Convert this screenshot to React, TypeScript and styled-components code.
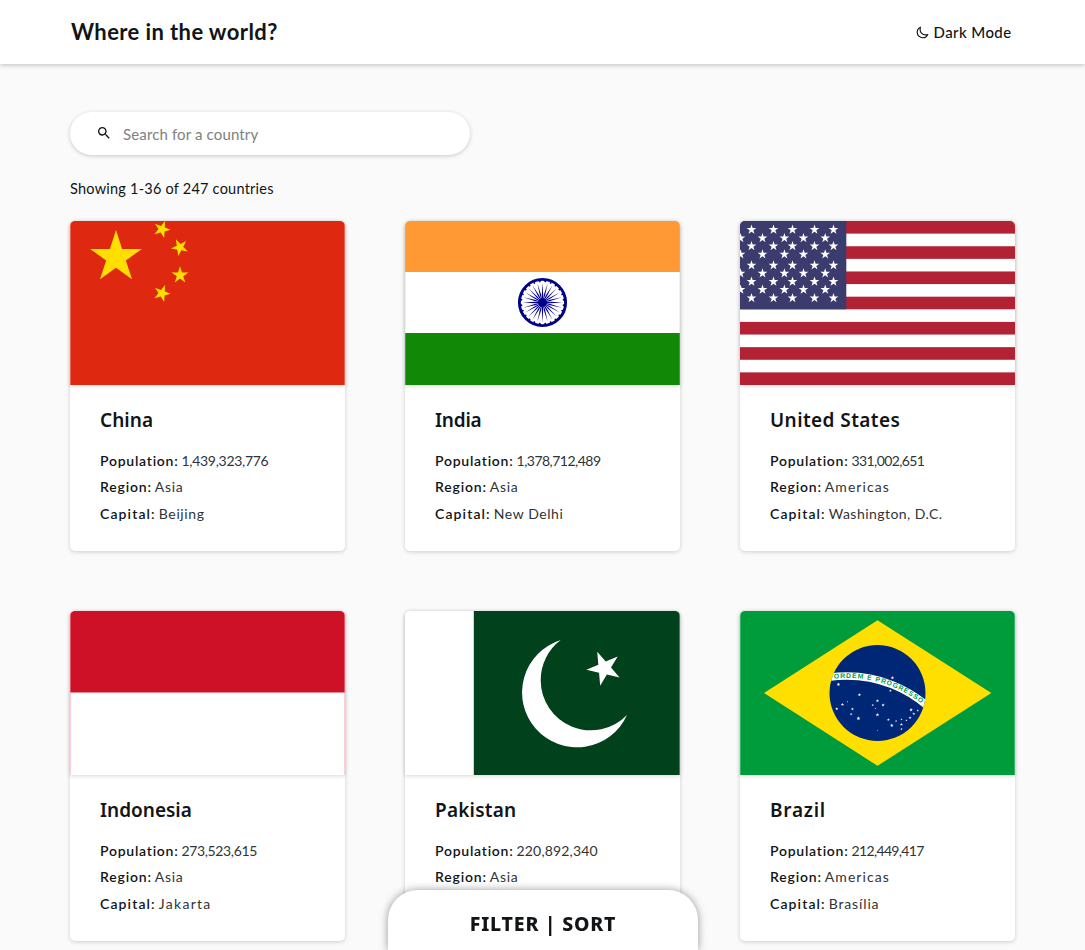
import React from 'react';
import styled, { createGlobalStyle } from 'styled-components';
import { IoMoonOutline } from 'react-icons/io5';
import { MdSearch } from 'react-icons/md';

const GlobalStyle = createGlobalStyle`
  *, *::before, *::after { box-sizing: border-box; }
  body {
    margin: 0;
    background: #fafafa;
    color: #111517;
    font-family: Lato, "Liberation Sans", sans-serif;
    font-variant-ligatures: none;
  }
  h1, h2, p { margin: 0; }
`;

const Header = styled.header`
  display: flex;
  align-items: center;
  justify-content: space-between;
  height: 64px;
  padding: 0 73.5px 0 70px;
  background: #fff;
  box-shadow: 0 2px 4px rgba(0, 0, 0, 0.18);
`;

const Title = styled.h1`
  padding-left: 1px;
  font-size: 22px;
  font-weight: 700;
  line-height: 64px;
  letter-spacing: 0.4px;
`;

const ThemeToggle = styled.button`
  display: flex;
  align-items: center;
  gap: 5px;
  padding: 0;
  border: 0;
  background: none;
  color: inherit;
  font: 500 15px/20px Lato, sans-serif;
  letter-spacing: 0.4px;
  path { stroke-width: 46px; }
`;

const Main = styled.main`
  padding: 48px 70px 9px;
`;

const SearchBox = styled.label`
  display: flex;
  align-items: center;
  width: 400px;
  height: 43px;
  padding: 0 26px 1px;
  border-radius: 22px;
  background: #fff;
  box-shadow: 0 1px 4px rgba(0, 0, 0, 0.2);
`;

const SearchInput = styled.input`
  flex: 1;
  margin-left: 11px;
  padding: 1px 0 0;
  border: 0;
  outline: 0;
  background: none;
  font: 400 15px/20px Lato, sans-serif;
  letter-spacing: 0.14px;
  &::placeholder { color: #808080; opacity: 1; }
`;

const Summary = styled.p`
  margin: 21px 0 20px;
  font-size: 14.5px;
  line-height: 25px;
  letter-spacing: 0.23px;
`;

const Grid = styled.section`
  display: grid;
  grid-template-columns: repeat(3, 275px);
  gap: 60px;
`;

const Card = styled.article`
  height: 330px;
  border-radius: 5px;
  background: #fff;
  box-shadow: 0 1px 4px rgba(0, 0, 0, 0.18);
`;

const Flag = styled.svg`
  display: block;
  width: 275px;
  height: 164px;
  border-radius: 5px 5px 0 0;
  box-shadow: 0 1px 4px rgba(0, 0, 0, 0.16);
`;

const CardBody = styled.div`
  padding: 20px 30px 0;
`;

const Name = styled.h2<{ $spacing: number }>`
  margin-bottom: 12.5px;
  font: 600 19px/30px "Noto Sans", sans-serif;
  letter-spacing: ${(p) => p.$spacing}px;
`;

const Fact = styled.p`
  display: flex;
  gap: 3px;
  font-size: 14px;
  line-height: 26.5px;
`;

const Label = styled.span<{ $spacing: number }>`
  font-weight: 600;
  letter-spacing: ${(p) => p.$spacing}px;
`;

const Value = styled.span<{ $spacing: number }>`
  color: #303437;
  white-space: nowrap;
  letter-spacing: ${(p) => p.$spacing}px;
`;

const FilterBar = styled.button`
  position: fixed;
  left: 388px;
  bottom: 0;
  width: 310px;
  height: 60px;
  padding: 7px 0 0;
  border: 0;
  border-radius: 30px 30px 0 0;
  background: #fff;
  box-shadow: 0 0 8px rgba(0, 0, 0, 0.4);
  color: #111517;
  font: 800 19.5px/28px "Noto Sans", sans-serif;
  letter-spacing: 0.82px;
`;

const starPoints = (cx: number, cy: number, r: number, turn = 0) =>
  Array.from({ length: 10 }, (_, i) => {
    const a = ((i * 36 - 90 + turn) * Math.PI) / 180;
    const d = i % 2 ? r * 0.382 : r;
    return `${(cx + d * Math.cos(a)).toFixed(2)},${(cy + d * Math.sin(a)).toFixed(2)}`;
  }).join(' ');

type StarProps = { x: number; y: number; r: number; turn?: number; fill?: string };
const Star = ({ x, y, r, turn, fill = '#fff' }: StarProps) => (
  <polygon points={starPoints(x, y, r, turn)} fill={fill} />
);

const Edges = ({ color = '#fff', opacity = 0.28 }: { color?: string; opacity?: number }) => (
  <g fill={color} opacity={opacity}>
    <rect width="1" height="164" />
    <rect x="274" width="1" height="164" />
  </g>
);

const China = () => (
  <>
    <rect width="275" height="164" fill="#de2910" />
    <Star x={46} y={36.3} r={27.2} fill="#ffde00" />
    <Star x={91.9} y={8.3} r={8.9} turn={21} fill="#ffde00" />
    <Star x={109.8} y={26.3} r={8.9} turn={46} fill="#ffde00" />
    <Star x={110} y={54.2} r={8.9} fill="#ffde00" />
    <Star x={91.9} y={72.3} r={8.9} turn={21} fill="#ffde00" />
    <Edges />
  </>
);

const India = () => (
  <>
    <rect width="275" height="164" fill="#fff" />
    <rect width="275" height="51" fill="#ff9933" />
    <rect y="112" width="275" height="52" fill="#128807" />
    <g transform="translate(137.5 81.5)" fill="#000088">
      <circle r="23.1" fill="none" stroke="#000088" strokeWidth="2.9" />
      <circle r="4.2" />
      {Array.from({ length: 24 }, (_, i) => (
        <g key={i} transform={`rotate(${i * 15})`}>
          <path d="M0 -20 L0.65 -8 L0.2 0 L-0.2 0 L-0.65 -8Z" />
          <circle r="0.95" cy="-21.3" transform="rotate(7.5)" />
        </g>
      ))}
    </g>
    <Edges color="#ffb98c" opacity={0.3} />
  </>
);

const usRows = [8.3, 16.7, 24.7, 33, 44, 52, 60.3, 68.3, 76.7];
const usOdd = [11.3, 33.3, 52.3, 74.3, 93.3];
const usEven = [0.3, 22.3, 44.2, 63.3, 85];

const UnitedStates = () => (
  <>
    <rect width="275" height="164" fill="#fff" />
    {Array.from({ length: 7 }, (_, i) => (
      <rect key={i} y={i * 25.23} width="275" height="12.62" fill="#b22234" />
    ))}
    <rect width="106.3" height="88.3" fill="#3c3b6e" />
    {usRows.map((y, row) =>
      (row % 2 ? usEven : usOdd).map((x) => <Star key={`${x}-${y}`} x={x + 0.2} y={y + 0.4} r={5.1} />),
    )}
  </>
);

const Indonesia = () => (
  <>
    <rect width="275" height="164" fill="#fff" />
    <rect width="275" height="81.5" fill="#ce1126" />
    <Edges color="#f59fac" opacity={0.5} />
  </>
);

const Pakistan = () => (
  <>
    <rect width="275" height="164" fill="#fff" />
    <rect x="68.8" width="206.2" height="164" fill="#01411c" />
    <path d="M155.7 29 A54.9 54.9 0 1 0 222 104 A50.2 50.2 0 0 1 135.7 69.1 A50.2 50.2 0 0 1 155.7 29Z" fill="#fff" />
    <Star x={199.2} y={57.2} r={17.9} turn={-23} />
    <rect x="274" width="1" height="164" fill="#fff" opacity="0.3" />
  </>
);

// x, y and radius of each star on the globe, in thirds of a flag unit
const southernSky: [number, number, number][] = [
  [55, 133, 1.7], [217, 113, 1.7], [211, 152, 1.3], [118, 164, 1.6], [82, 185, 0.8], [67, 193, 1.6],
  [50, 206, 1.5], [97, 207, 1.4], [93, 222, 1.3], [115, 235, 1.9], [172, 182, 1.6], [158, 195, 1.2],
  [189, 195, 1.6], [166, 205, 0.8], [172, 224, 1.8], [273, 209, 1.8], [293, 211, 1.1], [281, 221, 1.4],
  [270, 233, 1.4], [259, 241, 1], [244, 238, 1], [228, 243, 1.1], [205, 239, 1.4], [215, 256, 1.7],
  [244, 253, 1.5], [244, 267, 1.2], [172, 271, 0.6],
];

const Brazil = () => (
  <>
    <defs>
      <clipPath id="globe"><circle cx="137.5" cy="82" r="48" /></clipPath>
      <path id="motto" d="M88 68.5 A120.6 120.6 0 0 1 196 106" />
    </defs>
    <rect width="275" height="164" fill="#009c3b" />
    <path d="M24 82 L137.5 9.2 L251.3 82 L137.5 154.8Z" fill="#ffdf00" />
    <circle cx="137.5" cy="82" r="48" fill="#002776" />
    <g clipPath="url(#globe)">
      <circle cx="107" cy="187.3" r="122.3" fill="none" stroke="#fff" strokeWidth="7.4" />
    </g>
    <text fill="#009c3b" fontFamily="Liberation Sans, sans-serif" fontWeight="700" fontSize="6.8">
      <textPath href="#motto" startOffset="6" textLength="93" lengthAdjust="spacing">ORDEM E PROGRESSO</textPath>
    </text>
    {southernSky.map(([x, y, r]) => (
      <Star key={`${x}-${y}`} x={x / 3 + 80.1} y={y / 3 + 29.1} r={r * 1.12} />
    ))}
    <Edges opacity={0.22} />
  </>
);

type Spaced = [text: string, spacing: number];
type Country = { name: Spaced; population: Spaced; region: Spaced; capital: Spaced; art: React.ReactNode };

const countries: Country[] = [
  { name: ['China', 0.05], population: ['1,439,323,776', -0.3], region: ['Asia', 0.7], capital: ['Beijing', 0.63], art: <China /> },
  { name: ['India', -0.2], population: ['1,378,712,489', -0.52], region: ['Asia', 0.7], capital: ['New Delhi', 0.57], art: <India /> },
  { name: ['United States', 0.42], population: ['331,002,651', -0.6], region: ['Americas', 1.05], capital: ['Washington, D.C.', 0.46], art: <UnitedStates /> },
  { name: ['Indonesia', 0], population: ['273,523,615', -0.37], region: ['Asia', 0.7], capital: ['Jakarta', 1.3], art: <Indonesia /> },
  { name: ['Pakistan', 0.2], population: ['220,892,340', 0.17], region: ['Asia', 0.7], capital: ['Islamabad', 0.6], art: <Pakistan /> },
  { name: ['Brazil', 0.75], population: ['212,449,417', -0.66], region: ['Americas', 1.05], capital: ['Brasília', 0.8], art: <Brazil /> },
];

const CountryCard = ({ name, population, region, capital, art }: Country) => (
  <Card>
    <Flag viewBox="0 0 275 164" role="img" aria-label={name[0]}>{art}</Flag>
    <CardBody>
      <Name $spacing={name[1]}>{name[0]}</Name>
      <Fact><Label $spacing={0.75}>Population:</Label><Value $spacing={population[1]}>{population[0]}</Value></Fact>
      <Fact><Label $spacing={0.82}>Region:</Label><Value $spacing={region[1]}>{region[0]}</Value></Fact>
      <Fact><Label $spacing={1.12}>Capital:</Label><Value $spacing={capital[1]}>{capital[0]}</Value></Fact>
    </CardBody>
  </Card>
);

export default function App() {
  return (
    <>
      <GlobalStyle />
      <Header>
        <Title>Where in the world?</Title>
        <ThemeToggle><IoMoonOutline size={13} />Dark Mode</ThemeToggle>
      </Header>
      <Main>
        <SearchBox>
          <MdSearch size={16} />
          <SearchInput placeholder="Search for a country" />
        </SearchBox>
        <Summary>Showing 1-36 of 247 countries</Summary>
        <Grid>
          {countries.map((country) => <CountryCard key={country.name[0]} {...country} />)}
        </Grid>
      </Main>
      <FilterBar>FILTER | SORT</FilterBar>
    </>
  );
}
